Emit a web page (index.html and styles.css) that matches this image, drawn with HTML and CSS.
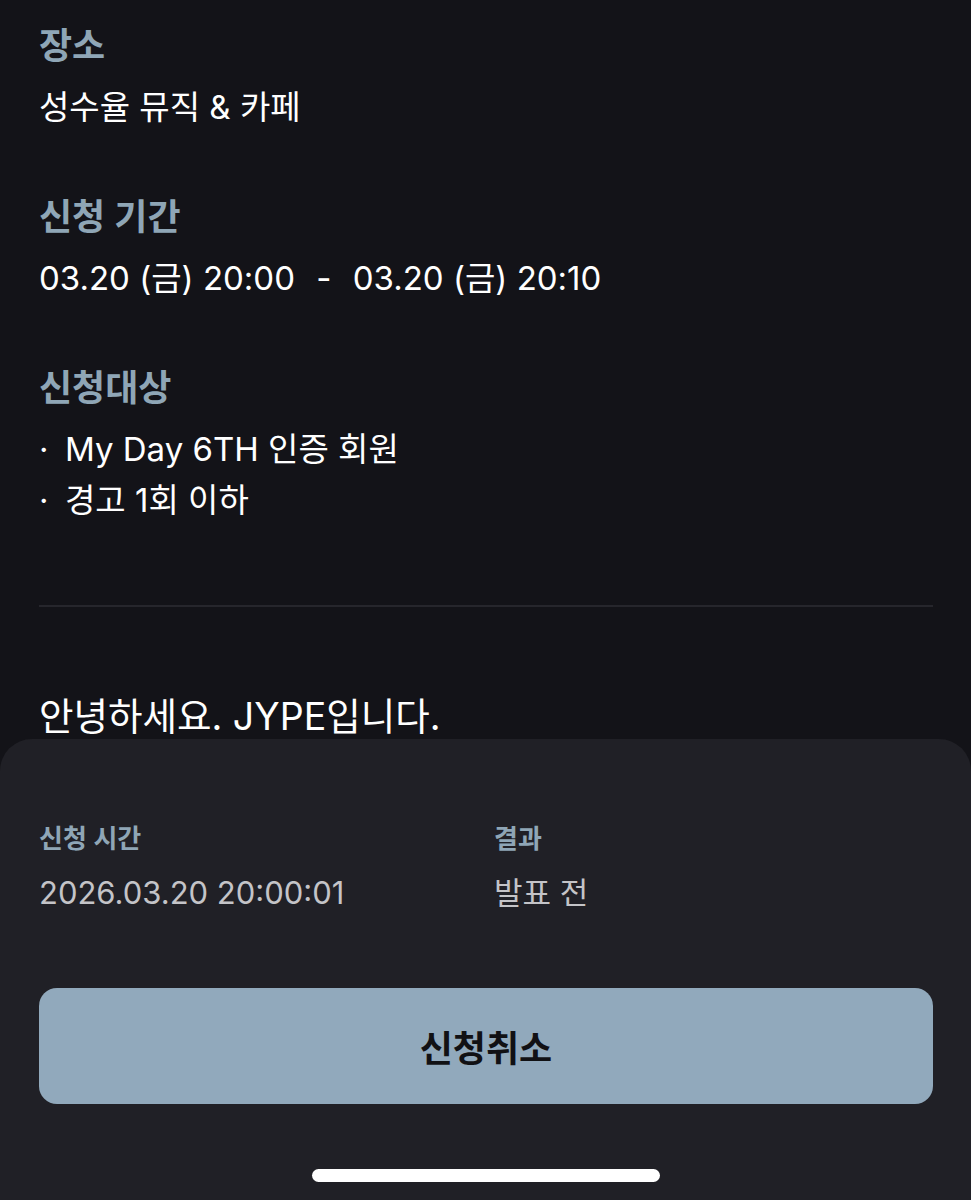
FILE: index.html
```html
<!DOCTYPE html>
<html lang="ko">
<head>
<meta charset="utf-8">
<title>신청 상세</title>
<link rel="stylesheet" href="styles.css">
</head>
<body>
<main class="page">
  <section class="info">
    <h2 class="info-title">장소</h2>
    <p class="info-value">성수율 뮤직 &amp; 카페</p>
  </section>
  <section class="info">
    <h2 class="info-title">신청 기간</h2>
    <p class="info-value">03.20 (금) 20:00 <span class="dash">-</span> 03.20 (금) 20:10</p>
  </section>
  <section class="info">
    <h2 class="info-title">신청대상</h2>
    <ul class="target-list">
      <li><span class="dot">·</span>My Day 6TH 인증 회원</li>
      <li><span class="dot">·</span>경고 1회 이하</li>
    </ul>
  </section>
  <hr class="divider">
  <p class="greeting">안녕하세요. JYPE입니다.</p>
</main>

<div class="sheet">
  <div class="sheet-grid">
    <div class="sheet-cell">
      <div class="sheet-label">신청 시간</div>
      <div class="sheet-value">2026.03.20 20:00:01</div>
    </div>
    <div class="sheet-cell">
      <div class="sheet-label">결과</div>
      <div class="sheet-value">발표 전</div>
    </div>
  </div>
  <button class="cancel-btn" type="button">신청취소</button>
  <div class="home-bar"></div>
</div>
</body>
</html>
```

FILE: styles.css
```css
* {
  box-sizing: border-box;
}

html, body {
  margin: 0;
  padding: 0;
}

body {
  background: #131318;
  color: #ffffff;
  font-family: Inter, "Noto Sans CJK KR", "Noto Sans", sans-serif;
  width: 971px;
  height: 1200px;
  overflow: hidden;
  position: relative;
}

.page {
  padding: 21px 38px 0 39px;
}

.info {
  margin-bottom: 60px;
}

.info-title {
  margin: 0 0 11px;
  font-size: 36px;
  line-height: 50px;
  font-weight: 600;
  color: #8fa6b6;
}

.info-value {
  margin: 0;
  font-size: 33px;
  line-height: 50px;
  font-weight: 400;
  color: #ffffff;
}

.dash {
  margin: 0 12px;
}

.target-list {
  list-style: none;
  margin: 0;
  padding: 0;
}

.target-list li {
  font-size: 33px;
  line-height: 51px;
  display: flex;
}

.dot {
  width: 26px;
  display: inline-block;
}

.info:last-of-type {
  margin-bottom: 0;
}

.divider {
  border: 0;
  height: 2px;
  background: #26262c;
  margin: 79px 0 0;
}

.greeting {
  margin: 85px 0 0;
  font-size: 37.5px;
  line-height: 50px;
  color: #ffffff;
}

.sheet {
  position: absolute;
  left: 0;
  right: 0;
  top: 739px;
  bottom: 0;
  background: #202026;
  border-radius: 32px 32px 0 0;
  padding: 82px 38px 0 39px;
  display: flex;
  flex-direction: column;
  align-items: stretch;
}

.sheet-grid {
  display: grid;
  grid-template-columns: 455px 1fr;
}

.sheet-label {
  font-size: 26px;
  line-height: 36px;
  font-weight: 600;
  color: #8fa6b6;
}

.sheet-value {
  margin-top: 14px;
  font-size: 31px;
  line-height: 44px;
  color: #c4c4c8;
}

.cancel-btn {
  margin-top: 73px;
  height: 116px;
  border: 0;
  border-radius: 18px;
  background: #91a9bc;
  color: #111114;
  font-family: Inter, "Noto Sans CJK KR", "Noto Sans", sans-serif;
  font-size: 36px;
  font-weight: 700;
  cursor: pointer;
}

.home-bar {
  align-self: center;
  margin-top: 65px;
  width: 348px;
  height: 13px;
  border-radius: 7px;
  background: #ffffff;
}
```
